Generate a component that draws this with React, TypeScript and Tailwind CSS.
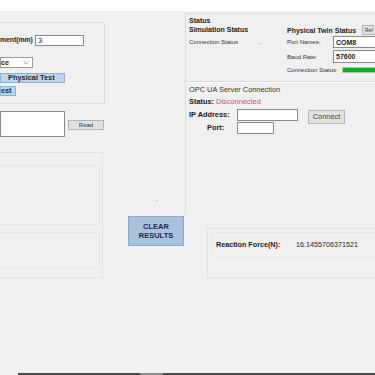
import React from 'react';

const TextBox: React.FC<{ className?: string; children?: React.ReactNode }> = ({ className = '', children }) => (
  <div className={`bg-white border border-[#8a8a8a] flex items-center pl-[2px] ${className}`}>{children}</div>
);

const WinButton: React.FC<{ className?: string; children?: React.ReactNode }> = ({ className = '', children }) => (
  <div className={`bg-[#e1e1e1] border border-[#b4b4b4] flex items-center justify-center text-[#333] ${className}`}>
    {children}
  </div>
);

const App: React.FC = () => {
  return (
    <div className="w-[375px] h-[375px] bg-[#f0f0f0] overflow-hidden flex flex-col font-['Liberation_Sans',Arial,sans-serif] text-[#1c1c1c] leading-none">
      <div className="h-[11px] bg-white shrink-0" />

      <div className="flex-1 flex">
        {/* left column */}
        <div className="w-[185px] shrink-0 flex flex-col">
          <div className="mt-[11px] w-[105px] h-[82px] border border-l-0 border-[#dcdcdc] flex flex-col">
            <div className="mt-[12px] h-[11px] flex items-center">
              <div className="w-[33px] whitespace-nowrap text-[6.8px] font-bold">ment(mm)</div>
              <TextBox className="ml-[2px] w-[49px] h-[11px] text-[7.5px]">3</TextBox>
            </div>
            <div className="mt-[11px] w-[33px] h-[11px] bg-white border border-[#9a9a9a] flex items-center justify-between pr-[3px]">
              <span className="text-[7.2px] font-bold">ce</span>
              <svg width="6" height="4" viewBox="0 0 6 4">
                <path d="M0.5 0.8 L3 3.2 L5.5 0.8" fill="none" stroke="#8a8a8a" strokeWidth="0.9" />
              </svg>
            </div>
            <div className="mt-[5px] w-[65px] h-[10px] bg-[#bdd4ec] border border-[#8fb0d6] flex items-center pl-[7px] text-[7.4px] font-bold text-[#1d2a3a]">
              Physical Test
            </div>
            <div className="mt-[3px] w-[16px] h-[10px] bg-[#bdd4ec] border border-[#8fb0d6] flex items-center text-[7.2px] font-bold text-[#1d2a3a]">
              est
            </div>
          </div>

          <div className="mt-[7px] h-[26px] flex items-center">
            <TextBox className="w-[65px] h-[26px]" />
            <WinButton className="ml-[3px] w-[36px] h-[10px] mt-[2px] text-[6px]">Read</WinButton>
          </div>

          <div className="mt-[15px] flex">
            <div className="w-[103px] h-[126px] border border-l-0 border-[#e2e2e2] flex flex-col">
              <div className="mt-[12px] w-[100px] h-[60px] border border-l-0 border-[#e4e4e4]" />
              <div className="mt-[7px] w-[100px] h-[36px] border border-l-0 border-[#e4e4e4]" />
            </div>
            <div className="flex-1 flex flex-col">
              <div className="mt-[46px] h-[4px] flex items-center pl-[53px] text-[6px] text-[#777]">-</div>
              <div className="mt-[14px] ml-[25px] w-[56px] h-[30px] bg-[#a8c2df] border border-[#8eaacb] flex flex-col items-center justify-center gap-[2px] text-[7.5px] font-bold text-[#1b2a40]">
                <span>CLEAR</span>
                <span>RESULTS</span>
              </div>
            </div>
          </div>
        </div>

        {/* right column */}
        <div className="flex-1 flex flex-col">
          <div className="mt-[2px] h-[202px] border-l border-t border-[#dcdcdc] flex flex-col">
            <div className="mt-[2px] h-[9px] flex items-center pl-[3px] text-[7px] font-bold">Status</div>
            <div className="flex">
              <div className="w-[101px] pl-[3px] flex flex-col">
                <div className="h-[9px] flex items-center text-[7px] font-bold">Simulation Status</div>
                <div className="mt-[4px] h-[8px] flex items-center text-[6px] text-[#333]">
                  <span className="w-[68px]">Connection Status</span>
                  <span className="text-[#888]">...</span>
                </div>
              </div>
              <div className="flex-1 flex flex-col">
                <div className="h-[10px] flex items-center">
                  <span className="w-[75px] text-[7px] font-bold">Physical Twin Status</span>
                  <WinButton className="w-[20px] h-[10px] text-[5px] justify-start pl-[2px] whitespace-nowrap">Ref</WinButton>
                </div>
                <div className="mt-[1px] h-[12px] flex items-center">
                  <span className="w-[46px] text-[6px] text-[#333]">Port Names:</span>
                  <TextBox className="flex-1 h-[12px] text-[7px] font-bold">COM8</TextBox>
                </div>
                <div className="mt-[2px] h-[13px] flex items-center">
                  <span className="w-[46px] text-[6px] text-[#333]">Baud Rate:</span>
                  <TextBox className="flex-1 h-[13px] text-[7px] font-bold">57600</TextBox>
                </div>
                <div className="mt-[3px] h-[8px] flex items-center">
                  <span className="w-[55px] text-[6px] text-[#333]">Connection Status:</span>
                  <div className="flex-1 h-[6px] bg-[#06b025] border border-[#bcbcbc]" />
                </div>
              </div>
            </div>

            <div className="mt-[7px] h-[2px] border-t border-[#d6d6d6] bg-white" />

            <div className="mt-[3px] h-[8px] flex items-center pl-[3px] text-[7.4px] text-[#333]">
              OPC UA Server Connection
            </div>
            <div className="mt-[4px] h-[8px] flex items-center pl-[3px] text-[7.4px]">
              <span className="font-bold">Status:</span>
              <span className="ml-[2px] text-[#e4457c]">Disconnected</span>
            </div>
            <div className="mt-[3px] h-[12px] flex items-start pl-[3px]">
              <span className="w-[48px] h-[12px] flex items-center text-[7.4px] font-bold">IP Address:</span>
              <TextBox className="w-[61px] h-[12px]" />
              <WinButton className="ml-[10px] mt-[1px] w-[37px] h-[14px] text-[7.4px] text-[#444]">Connect</WinButton>
            </div>
            <div className="mt-[1px] h-[12px] flex items-center pl-[21px]">
              <span className="w-[30px] text-[7.4px] font-bold">Port:</span>
              <TextBox className="w-[37px] h-[12px]" />
            </div>
          </div>

          <div className="mt-[13px] ml-[22px] h-[50px] border border-r-0 border-[#e2e2e2] flex flex-col">
            <div className="mt-[3px] ml-[4px] h-[26px] border border-r-0 border-[#e6e6e6] flex items-center pl-[3px] text-[7.2px]">
              <span className="w-[80px] font-bold">Reaction Force(N):</span>
              <span className="text-[#222]">16.1455706371521</span>
            </div>
          </div>
        </div>
      </div>

      <div className="h-[2px] ml-[18px] bg-[#4a4a4a] flex shrink-0">
        <div className="ml-[122px] w-[23px] h-[2px] bg-[#8a8a8a]" />
      </div>
    </div>
  );
};

export default App;
